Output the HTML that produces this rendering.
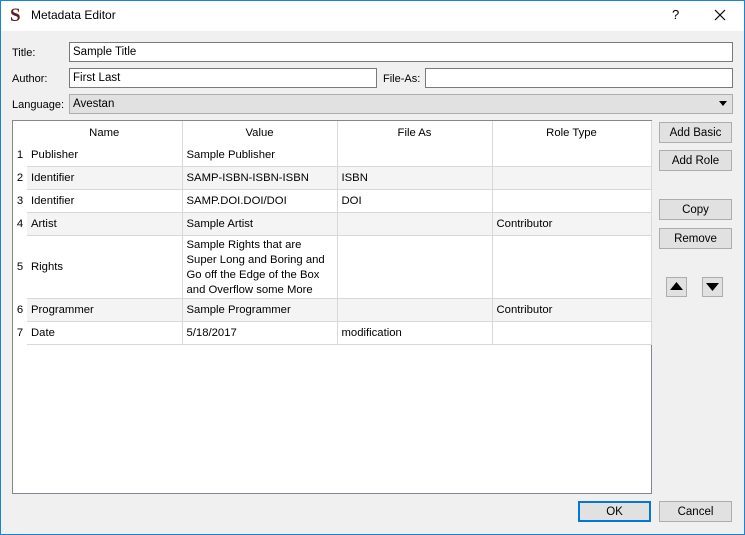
<!DOCTYPE html>
<html><head><style>
*{margin:0;padding:0;box-sizing:border-box}
body{width:745px;height:535px;overflow:hidden;font-family:"Liberation Sans",sans-serif;font-size:12px;color:#000;background:#f0f0f0;position:relative}
.a{position:absolute}
.win{left:0;top:0;width:745px;height:535px;border:1px solid #1883d7}
.tb{left:1px;top:1px;width:743px;height:30px;background:#fff}
.inp{background:#fff;border:1px solid #7a7a7a;padding-left:3px;line-height:19px;height:20px;font-size:11.5px}
.btn{background:#e1e1e1;border:1px solid #adadad;text-align:center;line-height:20px;font-size:11.5px}
.lbl{line-height:14px;font-size:11px}
table{border-collapse:collapse;position:absolute;left:13px;top:121px;background:#fff;table-layout:fixed;font-size:11.3px}
td{border-right:1px solid #d8d8d8;border-bottom:1px solid #d8d8d8;padding:2px 4px 0;height:23px;vertical-align:middle;line-height:15px;overflow:hidden;white-space:nowrap}
td.n{padding:2px 2px 0;text-align:center;background:#fff;border:none}
tr.h td{text-align:center;height:22px;border-bottom:none}
tr.alt td{background:#f4f4f4}
tr.alt td.n{background:#fff}
</style></head><body>
<div class="a win"></div>
<div class="a tb"></div>
<div class="a" style="left:10px;top:6px;font-family:'Liberation Serif',serif;font-weight:bold;font-size:19px;color:#5a2020;line-height:20px">S</div>
<div class="a" style="left:31px;top:8px;font-size:12px">Metadata Editor</div>
<div class="a" style="left:672px;top:7px;font-size:13px">?</div>
<svg class="a" style="left:714px;top:9px" width="12" height="12"><path d="M1 1L11 11M11 1L1 11" stroke="#000" stroke-width="1.2"/></svg>

<div class="a lbl" style="left:12px;top:46px">Title:</div>
<div class="a inp" style="left:69px;top:42px;width:664px">Sample Title</div>
<div class="a lbl" style="left:12px;top:72px">Author:</div>
<div class="a inp" style="left:69px;top:68px;width:308px">First Last</div>
<div class="a lbl" style="left:383px;top:72px">File-As:</div>
<div class="a inp" style="left:425px;top:68px;width:308px"></div>
<div class="a lbl" style="left:12px;top:98px">Language:</div>
<div class="a inp" style="left:69px;top:94px;width:664px;background:#e1e1e1;border-color:#adadad">Avestan</div>
<svg class="a" style="left:719px;top:101px" width="8" height="5"><path d="M0 0H8L4 5Z" fill="#000"/></svg>

<div class="a" style="left:12px;top:120px;width:640px;height:374px;background:#fff;border:1px solid #828790"></div>
<table>
<colgroup><col style="width:14px"><col style="width:155px"><col style="width:155px"><col style="width:155px"><col style="width:159px"></colgroup>
<tr class="h"><td class="n"></td><td>Name</td><td>Value</td><td>File As</td><td>Role Type</td></tr>
<tr><td class="n">1</td><td>Publisher</td><td>Sample Publisher</td><td></td><td></td></tr>
<tr class="alt"><td class="n">2</td><td>Identifier</td><td>SAMP-ISBN-ISBN-ISBN</td><td>ISBN</td><td></td></tr>
<tr><td class="n">3</td><td>Identifier</td><td>SAMP.DOI.DOI/DOI</td><td>DOI</td><td></td></tr>
<tr class="alt"><td class="n">4</td><td>Artist</td><td>Sample Artist</td><td></td><td>Contributor</td></tr>
<tr><td class="n">5</td><td>Rights</td><td style="height:63px">Sample Rights that are<br>Super Long and Boring and<br>Go off the Edge of the Box<br>and Overflow some More</td><td></td><td></td></tr>
<tr class="alt"><td class="n">6</td><td>Programmer</td><td>Sample Programmer</td><td></td><td>Contributor</td></tr>
<tr><td class="n">7</td><td>Date</td><td>5/18/2017</td><td>modification</td><td></td></tr>
</table>

<div class="a btn" style="left:659px;top:122px;width:73px;height:21px">Add Basic</div>
<div class="a btn" style="left:659px;top:150px;width:73px;height:21px">Add Role</div>
<div class="a btn" style="left:659px;top:199px;width:73px;height:21px">Copy</div>
<div class="a btn" style="left:659px;top:228px;width:73px;height:21px">Remove</div>
<div class="a btn" style="left:666px;top:277px;width:21px;height:20px"></div>
<svg class="a" style="left:670px;top:282px" width="13" height="8"><path d="M0 8H13L6.5 0Z" fill="#000"/></svg>
<div class="a btn" style="left:702px;top:277px;width:21px;height:20px"></div>
<svg class="a" style="left:706px;top:283px" width="13" height="8"><path d="M0 0H13L6.5 8Z" fill="#000"/></svg>

<div class="a btn" style="left:578px;top:501px;width:73px;height:21px;border:2px solid #0078d7;line-height:18px">OK</div>
<div class="a btn" style="left:659px;top:501px;width:73px;height:21px">Cancel</div>
</body></html>
